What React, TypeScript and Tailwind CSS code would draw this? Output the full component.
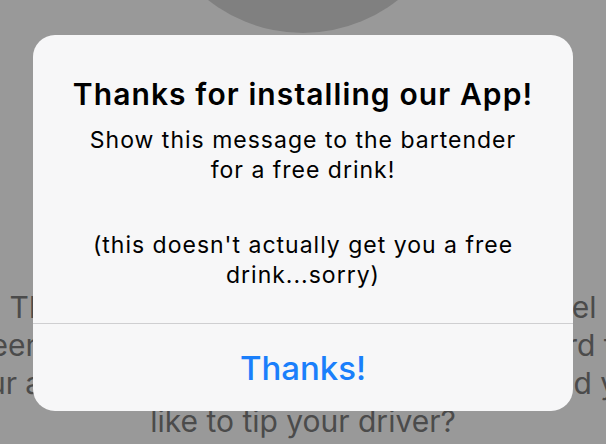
import React from 'react';

const backdropLines = [
  'Thanks for riding! We hope that the travel',
  'seemed safe and pleasant. We worked hard to',
  'your appreciation for the good ride, so would you',
  'like to tip your driver?',
];

function Backdrop() {
  return (
    <div className="flex flex-col items-center">
      {/* avatar */}
      <div className="mt-[-273px] h-[306px] w-[306px] shrink-0 rounded-full bg-[#808080]" />
      <div className="mt-[255px] flex w-full flex-col items-center">
        {backdropLines.map((line) => (
          <div
            key={line}
            className="whitespace-nowrap text-[30px] leading-[38px] text-[#4b4b4b]"
          >
            {line}
          </div>
        ))}
      </div>
    </div>
  );
}

function Alert() {
  return (
    <div className="absolute left-[33px] top-[35px] flex h-[376px] w-[540px] flex-col overflow-hidden rounded-[22px] bg-[#f7f7f8] text-center">
      <div className="flex flex-col px-2 pt-[41px] pb-[33px]">
        <h2 className="text-[30px] font-semibold leading-[36px] tracking-[1.1px] text-black">
          Thanks for installing our App!
        </h2>
        <p className="mt-[13px] text-[23px] leading-[30px] tracking-[1px] text-black">
          Show this message to the bartender
          <br />
          for a free drink!
        </p>
        <p className="mt-[45px] text-[23px] leading-[30px] tracking-[1px] text-black">
          (this doesn't actually get you a free
          <br />
          drink...sorry)
        </p>
      </div>
      <div className="h-px bg-[#cfcfd1]" />
      <button className="flex flex-1 items-center justify-center text-[33px] font-medium leading-[40px] text-[#1a7ffb]">
        Thanks!
      </button>
    </div>
  );
}

export default function App() {
  return (
    <div
      className="relative h-[444px] w-[606px] overflow-hidden bg-[#999999]"
      style={{ fontFamily: 'Inter, "Liberation Sans", sans-serif' }}
    >
      <Backdrop />
      <Alert />
    </div>
  );
}
